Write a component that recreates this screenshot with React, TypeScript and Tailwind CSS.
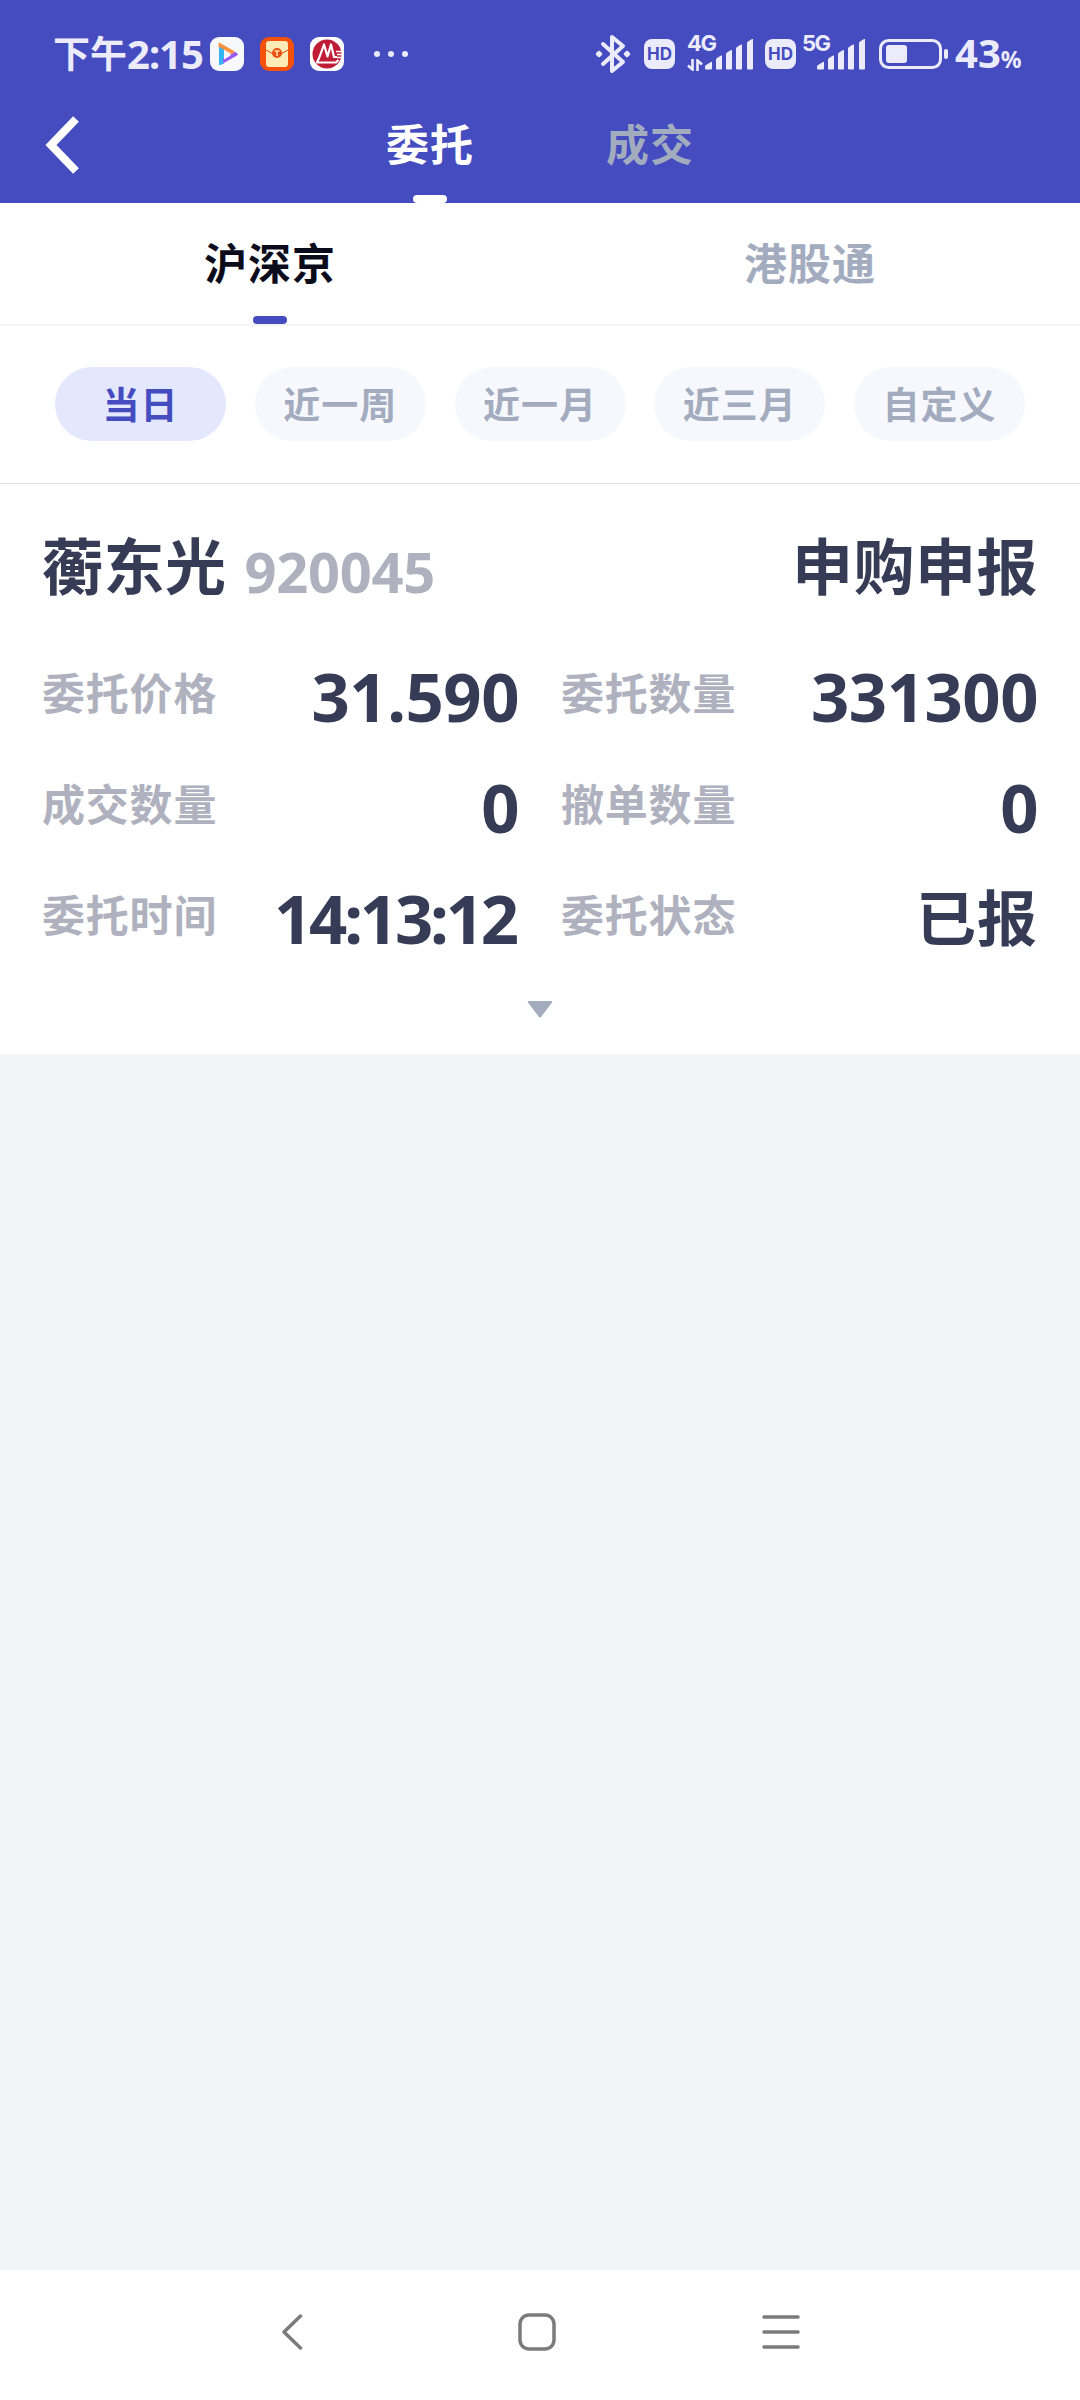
import { FunctionComponent } from "react";

const ranges = ["当日", "近一周", "近一月", "近三月", "自定义"];

const HdBadge: FunctionComponent = () => (
  <div className="w-[31px] h-[30px] rounded-[8px] bg-[#ecebfc] text-[#444cbf] flex items-center justify-center text-[17px] leading-none font-bold font-['Inter']">
    HD
  </div>
);

const SignalBars: FunctionComponent = () => (
  <svg width="48" height="31" viewBox="0 0 48 31" fill="#ecebfc">
    <path d="M0 29.500v-2q0-1 1-1.500l5-3q1-.5 1 .5v6q0 1-1 1h-5q-1 0-1-1z" />
    <path d="M11 29.500v-9q0-1 1-1.500l4-2.400q1-.5 1 .5v12.400q0 1-1 1h-4q-1 0-1-1z" />
    <path d="M21 29.500v-14.500q0-1 1-1.500l4-2.400q1-.5 1 .5v17.900q0 1-1 1h-4q-1 0-1-1z" />
    <path d="M31 29.500v-20q0-1 1-1.500l4-2.400q1-.5 1 .5v23.400q0 1-1 1h-4q-1 0-1-1z" />
    <path d="M42 29.500v-25.500q0-1 1-1.500l4-2.400q1-.5 1 .5v28.900q0 1-1 1h-4q-1 0-1-1z" />
  </svg>
);

const StatusBar: FunctionComponent = () => (
  <div className="h-[108px] pl-[53px] flex flex-row items-center text-[#ecebfc]">
    <div className="w-[157px] h-[50px] flex flex-row items-center whitespace-nowrap font-bold">
      <span className="text-[37px] leading-[50px]">下午</span>
      <span className="text-[40px] leading-[50px] tracking-[-1px]">2:15</span>
    </div>
    <svg width="34" height="34" viewBox="0 0 34 34">
      <rect width="34" height="34" rx="9" fill="#f7f8fb" />
      <path d="M9 7v20q0 1.500 1.500 1l3.500-1.500v-16z" fill="#35b4f4" />
      <path d="M13 26.500l14-8q1.500-1 .5-2l-2.500-1.700-12 7z" fill="#9a5cf0" />
      <path d="M8.500 6.500q0-1 1.500-.5l14 8q1 .8 0 1.500l-2.500 1.500-13-7.500z" fill="#fb9240" />
      <path d="M14 14.500v8l7-4.200z" fill="#f7f8fb" />
    </svg>
    <svg className="ml-4" width="34" height="34" viewBox="0 0 34 34">
      <rect width="34" height="34" rx="9" fill="#f4510b" />
      <rect x="6" y="4" width="22" height="26" rx="3" fill="#ffebb5" />
      <path d="M6 13l8 4.500M28 13l-8 4.500" stroke="#e0490d" strokeWidth="1" />
      <circle cx="17" cy="16" r="5" fill="#e85012" />
      <path d="M14.500 14h5M17 14v5" stroke="#ffe5a5" strokeWidth="1.500" />
    </svg>
    <svg className="ml-4" width="34" height="34" viewBox="0 0 34 34">
      <rect width="34" height="34" rx="9" fill="#fff" />
      <circle cx="17" cy="17" r="14.500" fill="#bf1d35" />
      <path
        d="M9.500 20L14 7.500l3.500 12L21 7.500l3 12.500h3M9.500 20L7 25.500h19l2.500-2.500"
        fill="none"
        stroke="#fff"
        strokeWidth="2.200"
        strokeLinejoin="round"
      />
      <path d="M26 14.500h8M27 17.500h7M27 20.500h6" stroke="#fff" strokeWidth="1.300" />
    </svg>
    <svg className="ml-[30px]" width="34" height="6" viewBox="0 0 34 6" fill="#ecebfc">
      <circle cx="3" cy="3" r="3" />
      <circle cx="17" cy="3" r="3" />
      <circle cx="31" cy="3" r="3" />
    </svg>
    <svg
      className="ml-[187px]"
      width="36"
      height="40"
      viewBox="0 0 36 40"
      fill="none"
      stroke="#ecebfc"
      strokeWidth="4"
      strokeLinejoin="round"
      strokeLinecap="round"
    >
      <path d="M8 10l20 18-11 9V3l11 9L8 30" />
      <path d="M4 18l2 2-2 2-2-2zM32 18l2 2-2 2-2-2z" fill="#ecebfc" strokeWidth="2.500" />
    </svg>
    <div className="ml-[13px]">
      <HdBadge />
    </div>
    <div className="ml-3 w-[18px] h-[38px] flex flex-col">
      <span className="h-[20px] text-[22px] leading-[17px] tracking-[-1.500px] font-bold font-['Inter']">4G</span>
      <svg className="mt-[4px]" width="16" height="12" viewBox="0 0 16 12" fill="none" stroke="#ecebfc" strokeWidth="2.600">
        <path d="M5.500 0v10.500L1 6.500M10.500 12V1.500L15 5.500" />
      </svg>
    </div>
    <SignalBars />
    <div className="ml-3">
      <HdBadge />
    </div>
    <div className="ml-[6px] w-[15px] h-[38px]">
      <div className="text-[22px] leading-[17px] tracking-[-1.500px] font-bold font-['Inter']">5G</div>
    </div>
    <SignalBars />
    <svg className="ml-[14px]" width="69" height="30" viewBox="0 0 69 30">
      <rect x="1.500" y="1.500" width="60" height="27" rx="8" fill="none" stroke="#ecebfc" strokeWidth="3" />
      <rect x="7" y="6" width="21" height="18" rx="3" fill="#ecebfc" />
      <rect x="65" y="10" width="4" height="10" rx="2" fill="#ecebfc" />
    </svg>
    <div className="ml-[7px] pt-[4px] flex flex-row items-baseline whitespace-nowrap font-bold">
      <span className="text-[40px] leading-[50px]">43</span>
      <span className="text-[23px] leading-[50px]">%</span>
    </div>
  </div>
);

const Header: FunctionComponent = () => (
  <div className="h-[203px] bg-[#444cbf]">
    <StatusBar />
    <div className="h-[95px] flex flex-row items-start pl-[45px]">
      <svg className="mt-2" width="34" height="58" viewBox="0 0 34 58" fill="none" stroke="#fff" strokeWidth="8">
        <path d="M31 3L6 29l25 26" />
      </svg>
      <div className="ml-[241px] w-[220px] h-[95px] flex flex-col items-center justify-between text-white">
        <span className="mt-[7px] text-[43px] leading-[60px] tracking-[1px] font-bold">委托</span>
        <div className="w-[34px] h-2 rounded-[4px] bg-white" />
      </div>
      <div className="w-[220px] h-[95px] flex flex-col items-center text-[#a3acbf]">
        <span className="mt-[7px] text-[43px] leading-[60px] tracking-[1px] font-bold">成交</span>
      </div>
    </div>
  </div>
);

const MarketTabs: FunctionComponent = () => (
  <div className="h-[123px] flex flex-row border-b-2 border-solid border-[#f3f4f6] text-[43px] leading-[60px] tracking-[1px] font-bold">
    <div className="flex-1 flex flex-col items-center justify-between">
      <span className="mt-[31px] text-[#0a0c1c]">沪深京</span>
      <div className="w-[34px] h-2 rounded-[4px] bg-[#444cbf]" />
    </div>
    <div className="flex-1 flex flex-col items-center text-[#a3acbf]">
      <span className="mt-[31px]">港股通</span>
    </div>
  </div>
);

const RangeFilter: FunctionComponent = () => (
  <div className="h-[158px] pl-[55px] pr-[55px] pb-px flex flex-row items-center justify-between border-b border-solid border-[#e1e2e6]">
    {ranges.map((range, i) => (
      <div
        key={range}
        className={`w-[171px] h-[74px] pt-px rounded-full flex items-center justify-center text-[37px] leading-[50px] tracking-[1px] font-bold ${
          i === 0 ? "bg-[#e4e8fe] text-[#444cbf]" : "bg-[#f6f8fd] text-[#a3acbf]"
        }`}
      >
        {range}
      </div>
    ))}
  </div>
);

type FieldProps = { label: string; value: string; kind?: "number" | "time" | "text" };

const valueStyles = {
  number: "text-[67px] tracking-[-0.5px]",
  time: "text-[67px] tracking-[-3.200px] mr-[3px]",
  text: "text-[60px] tracking-[1px]",
};

const Field: FunctionComponent<FieldProps> = ({ label, value, kind = "number" }) => (
  <div className="h-[111px] flex flex-row items-center justify-between whitespace-nowrap font-bold">
    <span className="pb-[8px] text-[43px] leading-[60px] tracking-[0.8px] text-[#afb2be]">{label}</span>
    <span className={`pb-[3px] leading-[80px] text-[#373c56] ${valueStyles[kind]}`}>{value}</span>
  </div>
);

const OrderCard: FunctionComponent = () => (
  <div className="h-[570px] bg-white px-[42px] pt-[43px] flex flex-col">
    <div className="h-[80px] flex flex-row items-start whitespace-nowrap font-bold text-[#373c56]">
      <span className="text-[61px] leading-[80px] tracking-[0.5px]">蘅东光</span>
      <span className="ml-[18px] mt-[4px] text-[56px] leading-[80px] tracking-[-0.3px] text-[#afb2be]">920045</span>
      <span className="ml-auto text-[61px] leading-[80px] tracking-[0.5px]">申购申报</span>
    </div>
    <div className="mt-[35px] grid grid-cols-2 gap-x-[42px]">
      <Field label="委托价格" value="31.590" />
      <Field label="委托数量" value="331300" />
      <Field label="成交数量" value="0" />
      <Field label="撤单数量" value="0" />
      <Field label="委托时间" value="14:13:12" kind="time" />
      <Field label="委托状态" value="已报" kind="text" />
    </div>
    <svg className="mt-[26px] self-center" width="26" height="17" viewBox="0 0 26 17" fill="#a3acbf">
      <path d="M2 0h22q2 0 1 1.500L14 16q-1 1-2 0L1 1.500Q0 0 2 0z" />
    </svg>
  </div>
);

const NavBar: FunctionComponent = () => (
  <div className="h-[130px] bg-white pl-[282px] pb-[6px] flex flex-row items-center">
    <svg width="22" height="36" viewBox="0 0 22 36" fill="none" stroke="#7b7b7b" strokeWidth="3.500" strokeLinecap="round" strokeLinejoin="round">
      <path d="M18.500 2L2 18l16.500 16" />
    </svg>
    <svg className="ml-[214px]" width="38" height="38" viewBox="0 0 38 38" fill="none" stroke="#7b7b7b" strokeWidth="3.500">
      <rect x="2" y="2" width="34" height="34" rx="9" />
    </svg>
    <svg className="ml-[206px]" width="38" height="36" viewBox="0 0 38 36" stroke="#7b7b7b" strokeWidth="3.500" strokeLinecap="round">
      <path d="M2 3h34M2 18h34M2 33h34" />
    </svg>
  </div>
);

const App: FunctionComponent = () => {
  return (
    <div className="w-[1080px] h-[2400px] overflow-hidden bg-[#f3f4f7] flex flex-col font-['Noto_Sans','Noto_Sans_CJK_SC',sans-serif]">
      <Header />
      <div className="bg-white">
        <MarketTabs />
        <RangeFilter />
      </div>
      <OrderCard />
      <div className="flex-1" />
      <NavBar />
    </div>
  );
};

export default App;
